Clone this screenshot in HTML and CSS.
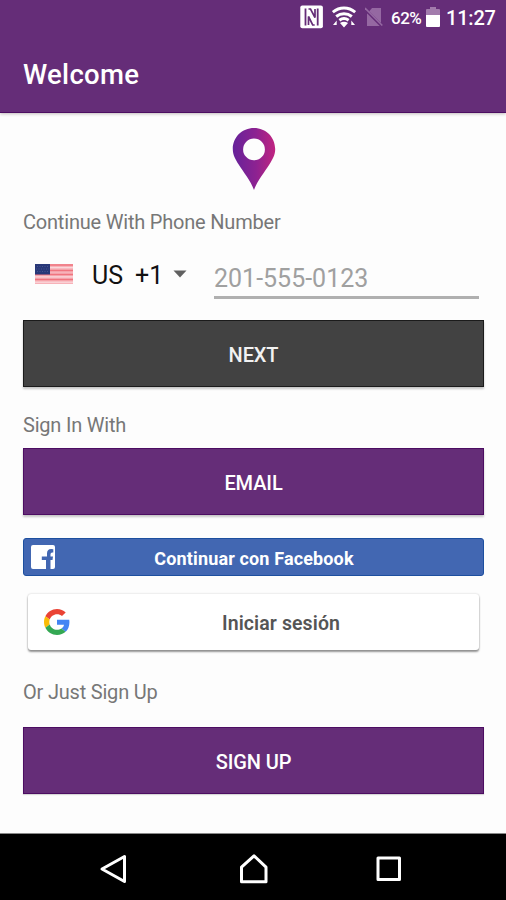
FILE: index.html
```html
<!DOCTYPE html>
<html lang="en">
<head>
<meta charset="utf-8">
<meta name="viewport" content="width=device-width">
<title>Welcome</title>
<link rel="stylesheet" href="styles.css">
</head>
<body>
<div class="screen">
  <header class="appbar">
    <div class="status">
      <svg class="nfc" width="24" height="24" viewBox="0 0 24 24"><rect x=".3" y=".5" width="22.6" height="22.8" rx="2" fill="#fff"/><path d="M5.500 3.500v17M17.700 3.500v17" fill="none" stroke="#652d78" stroke-width="1.800"/><path d="M8.500 4h2l4.500 8.500V4M14.700 20h-2L8.500 11.500V20" fill="none" stroke="#652d78" stroke-width="1.700"/></svg>
      <svg class="wifi" width="24" height="22" viewBox="0 0 24 22"><g fill="none" stroke="#fff" stroke-width="3"><path d="M.8 6.200C7.500.5 16.500.5 23.200 6.200M4.200 10.500c4.700-3.700 10.900-3.700 15.600 0M7.400 14.300c2.800-2.200 6.400-2.200 9.200 0"/></g><path d="M8 17q4-2.400 8 0l-4 4.500zM1 19l3.700-4.500V19zM23 19l-3.700-4.500V19z" fill="#fff"/></svg>
      <svg class="sim" width="18" height="20" viewBox="0 0 18 20"><path d="M7 1h9v18H2V7z" fill="#9568a2"/><path d="M0 2.200l17 17" stroke="#652d78" stroke-width="3"/><path d="M0 1l17.300 17.500" stroke="#9568a2" stroke-width="1.600"/></svg>
      <span class="percent">62%</span>
      <svg class="battery" width="14" height="20" viewBox="0 0 14 20"><path d="M4 0h6v2h3q1 0 1 1v5H0V3q0-1 1-1h3z" fill="#a27bac"/><path d="M0 8h14v11q0 1-1 1H1q-1 0-1-1z" fill="#fff"/></svg>
      <span class="clock">11:27</span>
    </div>
    <h1>Welcome</h1>
  </header>
  <main>
    <svg class="pin" width="44" height="64" viewBox="0 0 44 64"><defs><linearGradient id="pin-fill" x1="0" y1="0" x2="1" y2="0"><stop offset="0" stop-color="#66229a"/><stop offset=".55" stop-color="#8d2291"/><stop offset="1" stop-color="#c12480"/></linearGradient></defs><path d="M22 1C10 1 .8 10.300.8 22c0 6 2.600 10.300 5.700 15.200C11.500 45.400 18.500 53 22 63c3.500-10 10.500-17.600 15.500-25.800C40.600 32.300 43.200 28 43.200 22 43.200 10.300 34 1 22 1zM22 11.500a10.900 10.900 0 1 1 0 21.800 10.900 10.900 0 0 1 0-21.800z" fill="url(#pin-fill)" fill-rule="evenodd"/></svg>
    <p class="label">Continue With Phone Number</p>
    <div class="phone">
      <div class="country">
        <svg class="flag" width="38" height="20" viewBox="0 0 38 20"><rect width="38" height="20" fill="#f7b2b9"/><path d="M0 1h38M0 6.500h38M0 10.500h38M0 15.500h38" stroke="#f0747e" stroke-width="1.600"/><path d="M0 3.700h38M0 12.900h38M0 18.200h38" stroke="#fbdfe2" stroke-width="1"/><rect width="15" height="10.500" fill="#283878"/><path d="M2 2.500h12M1 5h13M2 7.500h12" stroke="#4d5c94" stroke-width=".8" stroke-dasharray="1 1.500"/></svg>
        <span class="code">US</span><span class="dial">+1</span>
        <svg class="caret" width="14" height="8" viewBox="0 0 14 8"><path d="M.5.500h13L7 7.500z" fill="#606060"/></svg>
      </div>
      <input class="number" type="tel" placeholder="201-555-0123" aria-label="Phone number">
    </div>
    <button class="btn next">NEXT</button>
    <p class="label sign-in">Sign In With</p>
    <button class="btn email">EMAIL</button>
    <button class="facebook">
      <svg width="24" height="24" viewBox="0 0 24 24"><path d="M2 0h20q2 0 2 2v20q0 2-2 2h-2.500v-9h2l.5-3.600h-2.500V9.200q0-1.700 1.800-1.700h1V4.300q-6.300-1.300-6.300 4.300v2.800H10.800V15h4.200v9H2q-2 0-2-2V2q0-2 2-2z" fill="#fff"/></svg>
      <span>Continuar con Facebook</span>
    </button>
    <button class="google">
      <svg width="26" height="26" viewBox="0 0 48 48"><path fill="#EA4335" d="M24 9.500c3.540 0 6.710 1.220 9.210 3.600l6.850-6.850C35.900 2.380 30.470 0 24 0 14.620 0 6.510 5.380 2.560 13.220l7.980 6.190C12.430 13.720 17.740 9.500 24 9.500z"/><path fill="#4285F4" d="M46.980 24.550c0-1.570-.15-3.090-.38-4.550H24v9.020h12.940c-.58 2.960-2.260 5.480-4.780 7.180l7.730 6c4.510-4.180 7.090-10.360 7.090-17.650z"/><path fill="#FBBC05" d="M10.530 28.590c-.48-1.450-.76-2.990-.76-4.590s.27-3.140.76-4.590l-7.980-6.190C.92 16.460 0 20.120 0 24c0 3.880.92 7.540 2.560 10.780z"/><path fill="#34A853" d="M24 48c6.480 0 11.930-2.130 15.890-5.810l-7.730-6c-2.150 1.450-4.920 2.300-8.160 2.300-6.260 0-11.570-4.220-13.470-9.910l-7.980 6.190C6.510 42.620 14.620 48 24 48z"/></svg>
      <span>Iniciar sesión</span>
    </button>
    <p class="label sign-up">Or Just Sign Up</p>
    <button class="btn register">SIGN UP</button>
  </main>
  <nav class="navbar">
    <svg width="30" height="30" viewBox="0 0 30 30"><path d="M26.500 2.500v25L4 15z"/></svg>
    <svg class="home" width="30" height="30" viewBox="0 0 30 30"><path d="M15 1.800l12 11.400v14.600H2.500V13.200z"/></svg>
    <svg width="30" height="30" viewBox="0 0 30 30"><path d="M4 4h21.500v21.500H4z"/></svg>
  </nav>
</div>
</body>
</html>
```
FILE: styles.css
```css
* { box-sizing: border-box; }
body { margin: 0; font-family: Roboto, "Liberation Sans", sans-serif; background: #fff; }
.screen { width: 506px; height: 900px; display: flex; flex-direction: column; background: #fdfdfd; overflow: hidden; }
.appbar { height: 113px; flex: none; background: #652d78; border-bottom: 1px solid #4c0d62; color: #fff; box-shadow: 0 1px 3px rgba(60, 40, 40, .3); }
.status { height: 36px; display: flex; align-items: center; justify-content: flex-end; padding-right: 10px; }
.nfc { margin-right: 8px; margin-top: -3px; }
.wifi { margin-right: 9px; margin-top: -2px; }
.sim { margin-right: 8px; margin-top: -2px; }
.percent { width: 32px; font-size: 17px; font-weight: 500; letter-spacing: -.5px; margin-right: 3px; white-space: nowrap; }
.battery { margin-right: 6px; margin-top: -2px; }
.clock { width: 50px; font-size: 20px; font-weight: 500; letter-spacing: -.2px; white-space: nowrap; }
h1 { margin: 23px 0 0 23px; font-size: 27.500px; line-height: 32px; font-weight: 500; letter-spacing: .3px; }
main { flex: 1; display: flex; flex-direction: column; padding: 14px 22px 0 23px; }
.pin { align-self: center; margin-left: 1px; flex: none; }
.label { margin: 19px 0 0; font-size: 20px; line-height: 24px; letter-spacing: -.2px; color: #777; }
.phone { display: flex; margin-top: 22px; height: 43px; }
.country { display: flex; align-items: center; width: 191px; height: 38px; padding-left: 12px; font-size: 25px; color: #111; }
.flag { margin-right: 19px; margin-top: -3px; }
.code { width: 43px; }
.dial { width: 38px; }
.caret { margin-top: -2px; }
.number { width: 265px; height: 43px; padding: 4px 0 0; border: 0; border-bottom: 3px solid #b0b0b0; border-radius: 0; background: none; font: 25px Roboto, "Liberation Sans", sans-serif; color: #222; outline: 0; }
.number::placeholder { color: #a0a0a0; opacity: 1; }
button { font-family: inherit; border: 0; padding: 0; flex: none; }
.btn { height: 67px; padding-top: 2px; font-size: 20px; font-weight: 500; letter-spacing: -.1px; color: #fff; background: #652d78; border: 1px solid #4c0d62; box-shadow: 0 2px 2px rgba(0, 0, 0, .22); }
.btn.next { margin-top: 21px; background: #424242; border-color: #1b1b1b; color: #f2f2f2; }
.label.sign-in { margin-top: 26px; }
.btn.email { margin-top: 11px; }
.facebook { display: flex; align-items: center; height: 38px; margin-top: 23px; padding: 0 7px; border-radius: 3px; background: #4267b2; border: 1px solid #1d4f9f; color: #fff; font-size: 18px; letter-spacing: .14px; font-weight: 700; }
.facebook span { flex: 1; padding: 2px 23px 0 0; }
.google { display: flex; align-items: center; height: 56px; margin: 18px 5px 0; padding-left: 16px; background: #fff; border-radius: 3px; box-shadow: 0 2px 2px rgba(0, 0, 0, .4), 0 0 2px rgba(0, 0, 0, .22); color: #555; font-size: 19.500px; letter-spacing: .1px; font-weight: 600; }
.google span { flex: 1; padding: 2px 0 0 13px; }
.label.sign-up { margin-top: 30px; }
.btn.register { margin-top: 23px; box-shadow: 0 1px 1px rgba(0, 0, 0, .15); }
.navbar { height: 67px; flex: none; background: #000; border-top: 1px solid #888; display: flex; justify-content: space-between; padding: 20px 102px 0 98px; }
.navbar svg { fill: none; stroke: #fff; stroke-width: 3; stroke-linejoin: round; }
.navbar .home { margin-left: 5px; }
```
